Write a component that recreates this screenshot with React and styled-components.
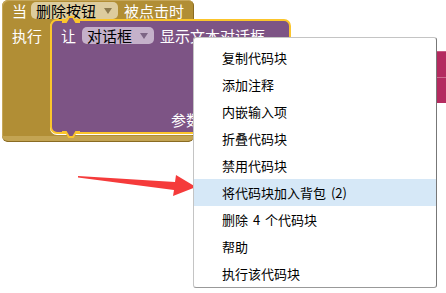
import React from 'react'
import styled, { createGlobalStyle } from 'styled-components'

const GlobalStyle = createGlobalStyle`
  html, body {
    margin: 0;
    padding: 0;
    background: #ffffff;
  }
  body {
    font-family: "Noto Sans CJK SC", "Noto Sans", sans-serif;
  }
`;

const Workspace = styled.div`
  position: relative;
  width: 446px;
  height: 293px;
  overflow: hidden;
  padding-left: 2px;
  box-sizing: border-box;
`;

const EventBlock = styled.div`
  width: 192px;
  height: 142px;
  background: #b18e35;
  border-radius: 6px 6px 8px 8px;
  box-shadow: inset 1px 1px 0 #c6a75a, inset -1px -1px 0 #8a6b22;
  display: flex;
  flex-direction: column;
  color: #ffffff;
  font-size: 15px;
  line-height: 17px;
`;

const Header = styled.div`
  height: 25px;
  box-sizing: border-box;
  padding: 2px 0 0 10px;
  display: flex;
  align-items: center;
  gap: 4px;
`;

const Label = styled.span`
  white-space: nowrap;
  margin-left: ${p => p.$ml || 0}px;
`;

const Dropdown = styled.span`
  display: inline-flex;
  align-items: center;
  height: 17px;
  padding: 0 6px 0 5px;
  border-radius: 5px;
  background: ${p => p.$bg};
  color: #000000;
  white-space: nowrap;
  gap: 8px;
`;

const Caret = styled.span`
  width: 0;
  height: 0;
  border-left: 4px solid transparent;
  border-right: 4px solid transparent;
  border-top: 6px solid ${p => p.$color};
`;

const Body = styled.div`
  flex: 1;
  display: flex;
`;

const DoLabel = styled.div`
  width: 38px;
  padding: 8px 0 0 10px;
  white-space: nowrap;
`;

const Statement = styled.div`
  position: relative;
  width: 228px;
  height: 101px;
  background: #7d5485;
  border: 2px solid #fbc52c;
  border-radius: 7px;
  box-shadow: 0 1px 0 #ffffff;
  display: flex;
  flex-direction: column;
  justify-content: space-between;
  padding: 6px 0 4px 9px;
  box-sizing: content-box;
  margin-right: -140px;
`;

const StatementRow = styled.div`
  display: flex;
  align-items: center;
  gap: 6px;
`;

const ParamLabel = styled.div`
  padding-left: 110px;
  white-space: nowrap;
`;

const Notch = styled.svg`
  position: absolute;
  left: 10px;
  ${p => (p.$bottom ? 'bottom: -7px;' : 'top: -6px;')}
`;

const Footer = styled.div`
  height: 12px;
  margin-top: 2px;
  border-radius: 0 0 8px 8px;
  background: linear-gradient(#c3a453 0, #c3a453 5px, #b18e35 6px);
  border-bottom: 1px solid #8a6b22;
`;

const PinkBlock = styled.div`
  position: absolute;
  left: 432px;
  top: 51px;
  width: 20px;
  height: 52px;
  background: #b42a5f;
  border-top: 1px solid #c95a83;
  box-sizing: border-box;
  &::after {
    content: '';
    position: absolute;
    left: 0;
    right: 0;
    top: 25px;
    height: 1px;
    background: #cf6b8f;
  }
`;

const Arrow = styled.svg`
  position: absolute;
  left: 0;
  top: 0;
`;

const Menu = styled.div`
  position: absolute;
  left: 193px;
  top: 37px;
  width: 244px;
  height: 251px;
  box-sizing: border-box;
  background: #ffffff;
  border: 1px solid #c4c4c4;
  border-right-color: #777777;
  border-bottom-color: #999999;
  border-radius: 3px;
  padding-top: 6px;
  font-size: 13px;
  color: #000000;
`;

const MenuItem = styled.div`
  height: 27px;
  line-height: 27px;
  padding-left: 28px;
  white-space: nowrap;
  word-spacing: 2px;
  background: ${p => (p.$active ? '#d6e8f7' : 'transparent')};
`;

const items = [
  '复制代码块',
  '添加注释',
  '内嵌输入项',
  '折叠代码块',
  '禁用代码块',
  '将代码块加入背包 (2)',
  '删除 4 个代码块',
  '帮助',
  '执行该代码块',
];

export default function App() {
  return (
    <>
      <GlobalStyle />
      <Workspace>
        <EventBlock>
          <Header>
            <Label>当</Label>
            <Dropdown $bg="#ddcc9e">
              删除按钮
              <Caret $color="#8c7a4f" />
            </Dropdown>
            <Label $ml={2}>被点击时</Label>
          </Header>
          <Body>
            <DoLabel>执行</DoLabel>
            <Statement>
              <Notch width="18" height="8" viewBox="0 0 18 8">
                <path d="M0 7 L4 7 L7 2 L11 2 L14 7 L18 7" fill="#7d5485" stroke="#fbc52c" strokeWidth="2" />
              </Notch>
              <StatementRow>
                <Label>让</Label>
                <Dropdown $bg="#c5b1ca">
                  对话框
                  <Caret $color="#7d6585" />
                </Dropdown>
                <Label>显示文本对话框</Label>
              </StatementRow>
              <ParamLabel>参数</ParamLabel>
              <Notch $bottom width="18" height="8" viewBox="0 0 18 8">
                <path d="M0 1 L4 1 L7 6 L11 6 L14 1 L18 1" fill="#7d5485" stroke="#fbc52c" strokeWidth="2" />
              </Notch>
            </Statement>
          </Body>
          <Footer />
        </EventBlock>
        <PinkBlock />
        <Arrow width="446" height="293" viewBox="0 0 446 293">
          <polygon
            points="78,176 175,182 176,175 196,187 173,196 174,190 78,177.5"
            fill="#f53b3b"
          />
        </Arrow>
        <Menu>
          {items.map(t => (
            <MenuItem key={t} $active={t.startsWith('将')}>
              {t}
            </MenuItem>
          ))}
        </Menu>
      </Workspace>
    </>
  )
}
